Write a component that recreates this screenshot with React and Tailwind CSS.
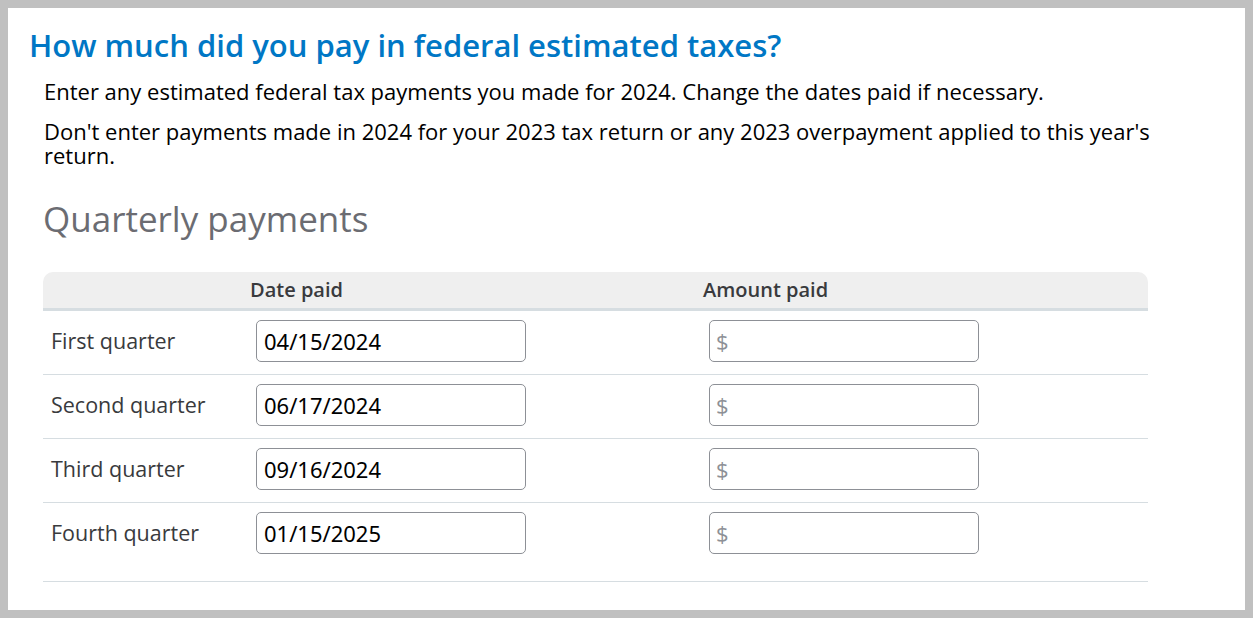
export default function App() {
  const rows = [
    ["First quarter", "04/15/2024"],
    ["Second quarter", "06/17/2024"],
    ["Third quarter", "09/16/2024"],
    ["Fourth quarter", "01/15/2025"],
  ];
  return (
    <div className="h-[618px] w-[1253px] bg-[#c0c0c0] p-2" style={{ fontFamily: "'Open Sans', sans-serif" }}>
      <div className="h-full w-full bg-white pl-[21px] pt-[19px]">
        <h1 className="text-[31px] leading-[36px] font-semibold text-[#0077c5]">How much did you pay in federal estimated taxes?</h1>
        <div className="w-[1135px] pl-[15px] text-[22px] leading-[24px] text-black">
          <p className="mt-[16px]">Enter any estimated federal tax payments you made for 2024. Change the dates paid if necessary.</p>
          <p className="mt-[16px]">Don't enter payments made in 2024 for your 2023 tax return or any 2023 overpayment applied to this year's return.</p>
        </div>
        <div className="pl-[14px]">
          <h2 className="mt-[30px] text-[35px] leading-[44px] text-[#6b6c72]">Quarterly payments</h2>
          <div className="mt-[31px] w-[1105px]">
            <div className="grid h-[39px] grid-cols-[207px_453px_1fr] items-center rounded-t-[10px] border-b-[3px] border-[#d6dde1] bg-[#efefef] text-[20px] font-semibold text-[#393a3d]">
              <div></div>
              <div>Date paid</div>
              <div>Amount paid</div>
            </div>
            {rows.map(([label, date], i) => (
              <div key={label} className={`grid grid-cols-[207px_453px_1fr] border-b border-[#d6dde1] pt-[9px] ${i === 3 ? "pb-[27px]" : "pb-[12px]"}`}>
                <div className="flex h-[42px] items-center pl-[8px] text-[21.5px] text-[#393a3d]">{label}</div>
                <div className="pl-[6px]">
                  <div className="flex h-[42px] w-[270px] items-center rounded-[5px] border border-[#8d9096] pl-[7px] text-[22px] text-black" style={{ fontFamily: "'Noto Sans', sans-serif" }}>{date}</div>
                </div>
                <div className="pl-[6px]">
                  <div className="flex h-[42px] w-[270px] items-center rounded-[5px] border border-[#8d9096] pl-[6px] text-[22px] text-[#8d9096]">$</div>
                </div>
              </div>
            ))}
          </div>
        </div>
      </div>
    </div>
  );
}
